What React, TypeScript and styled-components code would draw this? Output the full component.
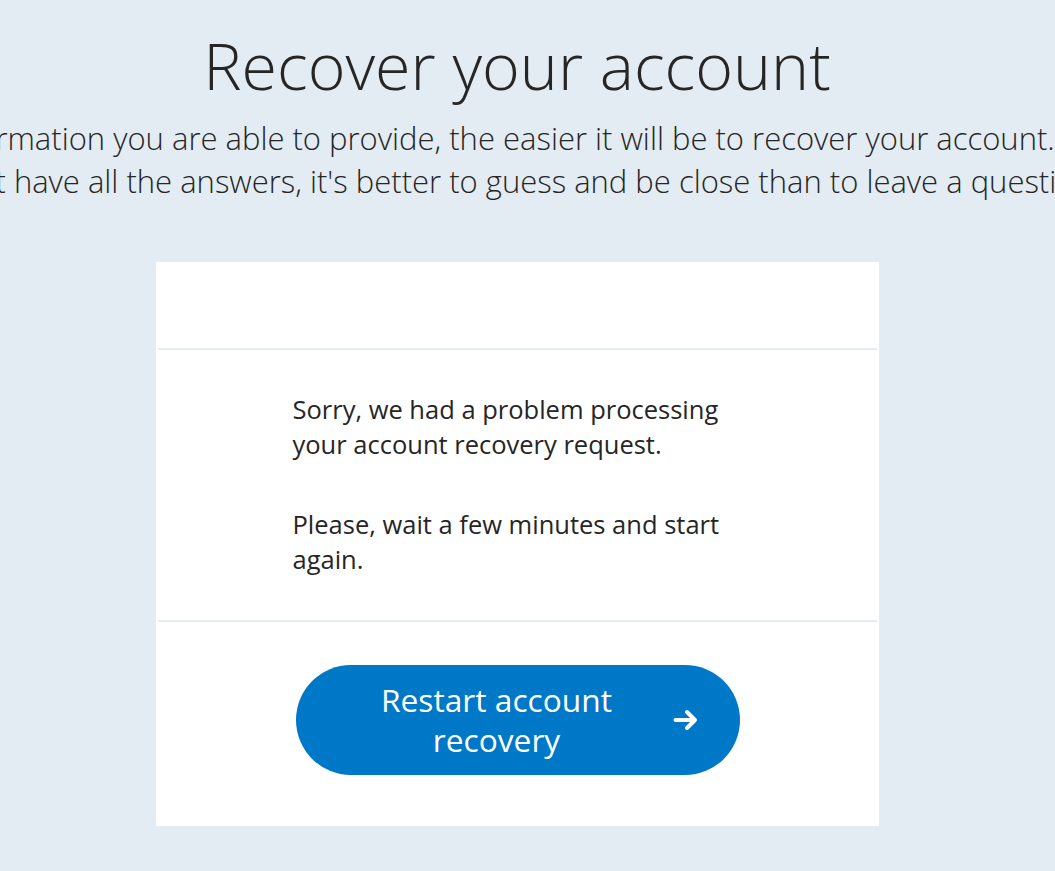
import styled, { createGlobalStyle } from "styled-components";

const GlobalStyle = createGlobalStyle`
    html, body {
        margin: 0;
        padding: 0;
        background: #e3ecf2;
        overflow-x: hidden;
    }
    body {
        font-family: "Open Sans", "Liberation Sans", sans-serif;
        color: #262626;
    }
`;

const Frame = styled.div`
    width: 100%;
    overflow: hidden;
`;

const Page = styled.div`
    display: flex;
    flex-direction: column;
    align-items: center;
    width: 1034px;
    padding-top: 21px;
    padding-bottom: 45px;
`;

const Title = styled.h1`
    margin: 0;
    font-size: 64.5px;
    font-weight: 300;
    line-height: 88px;
    color: #262626;
`;

const Intro = styled.div`
    display: flex;
    flex-direction: column;
    align-items: center;
    margin-top: 8px;
    width: 100%;
`;

const IntroLine = styled.p<{ $shift: number }>`
    margin: 0;
    margin-left: ${(p) => p.$shift}px;
    white-space: nowrap;
    font-size: 31px;
    font-weight: 300;
    line-height: 43px;
    color: #262626;
`;

const Card = styled.section`
    margin-top: 59px;
    width: 723px;
    background: #ffffff;
    display: flex;
    flex-direction: column;
    padding: 0 2px;
    box-sizing: border-box;
`;

const Section = styled.div<{ $height?: number }>`
    border-bottom: 2px solid #e3ecf1;
    ${(p) => (p.$height ? `height: ${p.$height}px;` : "")}
    &:last-child {
        border-bottom: none;
    }
`;

const Message = styled.div`
    padding: 42px 100px 43px 135px;
    display: flex;
    flex-direction: column;
    gap: 45px;
`;

const Paragraph = styled.p`
    margin: 0;
    font-size: 25.5px;
    line-height: 35px;
    color: #262626;
`;

const Actions = styled.div`
    display: flex;
    justify-content: flex-start;
    padding: 43px 0 51px 138px;
`;

const PrimaryButton = styled.button`
    width: 444px;
    height: 110px;
    border: none;
    border-radius: 55px;
    background: #0078c8;
    color: #ffffff;
    display: flex;
    align-items: center;
    gap: 15px;
    padding: 0 41px 0 40px;
    box-sizing: border-box;
    font-family: inherit;
    cursor: pointer;
`;

const ButtonLabel = styled.span`
    flex: 1;
    text-align: center;
    font-size: 31.7px;
    line-height: 40px;
`;

const ArrowIcon = () => (
    <svg width="26" height="24" viewBox="0 0 26 24" fill="none">
        <path d="M2.5 12H22M14 4l8 8-8 8" stroke="#ffffff" strokeWidth="4" strokeLinecap="round" strokeLinejoin="round" />
    </svg>
);

const App = () => {
    return (
        <Frame>
            <GlobalStyle />
            <Page>
                <Title>Recover your account</Title>
                <Intro>
                    <IntroLine $shift={-179}>
                        The more information you are able to provide, the easier it will be to recover your account.
                    </IntroLine>
                    <IntroLine $shift={0}>
                        If you don't have all the answers, it's better to guess and be close than to leave a question blank.
                    </IntroLine>
                </Intro>
                <Card>
                    <Section $height={86} />
                    <Section>
                        <Message>
                            <Paragraph>
                                Sorry, we had a problem processing
                                <br />
                                your account recovery request.
                            </Paragraph>
                            <Paragraph>
                                Please, wait a few minutes and start
                                <br />
                                again.
                            </Paragraph>
                        </Message>
                    </Section>
                    <Section>
                        <Actions>
                            <PrimaryButton>
                                <ButtonLabel>
                                    Restart account
                                    <br />
                                    recovery
                                </ButtonLabel>
                                <ArrowIcon />
                            </PrimaryButton>
                        </Actions>
                    </Section>
                </Card>
            </Page>
        </Frame>
    );
};

export default App;
